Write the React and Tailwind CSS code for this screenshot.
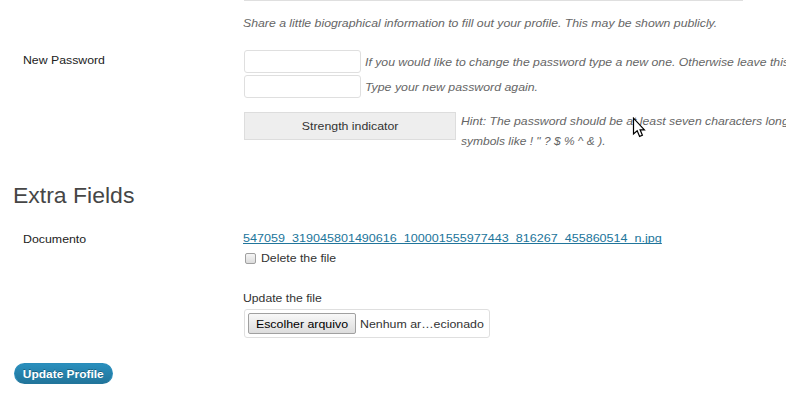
function Cursor() {
  return (
    <svg className="absolute left-[632px] top-[117px] h-[22px] w-[15px]" viewBox="0 0 15 22">
      <path d="M1.5 1.2V17L5.2 13.8L7.6 19.4L10.4 18.2L8.1 12.8H12.4Z" fill="#fff" stroke="#000" strokeWidth="1.2" />
    </svg>
  );
}

function PasswordInput() {
  return <input type="password" className="h-[23px] w-[117px] shrink-0 rounded-[3px] border border-[#dfdfdf] bg-white px-1 outline-none" />;
}

const wide = "inline-block origin-left whitespace-nowrap";
const hint = "block origin-left whitespace-nowrap italic text-[#666]";

export default function App() {
  return (
    <main className="relative h-[417px] w-[786px] overflow-hidden bg-white font-['Liberation_Sans',Arial,sans-serif] text-[11px] leading-5 text-[#333]">
      <div className="ml-[244px] h-px w-[499px] bg-[#dfdfdf]" />
      <p className="ml-[243px] mt-[12px] w-[425px]">
        <span className={`${hint} scale-x-[1.115]`}>
          Share a little biographical information to fill out your profile. This may be shown publicly.
        </span>
      </p>
      <section className="mt-[17px] flex h-[101px]">
        <div className="w-[220px] shrink-0 pl-[23px] text-[#222]">
          <span className={`${wide} scale-x-[1.117]`}>New Password</span>
        </div>
        <div className="w-[540px] shrink-0 pl-[24px]">
          <div className="flex h-[25px] gap-[4px]">
            <PasswordInput />
            <span className={`mt-[2px] ${hint} scale-x-[1.113]`}>
              If you would like to change the password type a new one. Otherwise leave this
            </span>
          </div>
          <div className="flex h-[25px] gap-[4px]">
            <PasswordInput />
            <span className={`mt-[2px] ${hint} scale-x-[1.12]`}>Type your new password again.</span>
          </div>
          <div className="mt-[11px] flex gap-[5px]">
            <div className="mt-px h-[28px] w-[212px] shrink-0 border border-[#ddd] bg-[#eee] text-center leading-[27px]">
              <span className="inline-block scale-x-[1.12]">Strength indicator</span>
            </div>
            <p>
              <span className={`${hint} scale-x-[1.112]`}>Hint: The password should be at least seven characters long</span>
              <span className={`${hint} scale-x-[1.09]`}>symbols like ! " ? $ % ^ &amp; ).</span>
            </p>
          </div>
        </div>
      </section>
      <h3 className="ml-[13px] mt-[31px] h-[28px] text-[22px] leading-[28px] text-[#464646]">
        <span className={`${wide} scale-x-[1.045]`}>Extra Fields</span>
      </h3>
      <section className="mt-[19px] flex h-[110px]">
        <div className="w-[220px] shrink-0 pl-[23px] text-[#222]">
          <span className={`${wide} scale-x-[1.123]`}>Documento</span>
        </div>
        <div className="pl-[23px]">
          <div className="-mt-px h-[20px]">
            <a className={`${wide} scale-x-[1.143] text-[#21759b] underline decoration-1 underline-offset-1 [text-decoration-skip-ink:none]`}>
              547059_319045801490616_100001555977443_816267_455860514_n.jpg
            </a>
          </div>
          <label className="flex h-[20px] items-center gap-[5px] pl-[2px]">
            <span className="h-[11px] w-[11px] rounded-[2px] border border-[#a0a0a0] bg-linear-to-b from-[#f5f5f5] to-[#dcdcdc]" />
            <span className={`${wide} scale-x-[1.117]`}>Delete the file</span>
          </label>
          <div className="mt-[20px] h-[20px]">
            <span className={`${wide} scale-x-[1.11]`}>Update the file</span>
          </div>
          <div className="ml-px mt-px flex h-[29px] w-[246px] items-center rounded-[3px] border border-[#dfdfdf] px-[3px]">
            <button className="h-[21px] w-[108px] shrink-0 rounded-[2px] border border-[#a0a0a0] bg-linear-to-b from-[#f8f8f8] to-[#dddddd] pt-px leading-[19px] text-black">
              <span className="inline-block whitespace-nowrap scale-x-[1.125]">Escolher arquivo</span>
            </button>
            <span className={`ml-[4px] ${wide} scale-x-[1.125]`}>Nenhum ar…ecionado</span>
          </div>
        </div>
      </section>
      <button className="ml-[14px] mt-[24px] block h-[21px] w-[99px] rounded-full border border-[#298cba] border-b-[#21759b] bg-linear-to-b from-[#2a8fbd] to-[#21759b] pt-px font-bold leading-[19px] text-white [text-shadow:0_-1px_0_rgba(0,0,0,0.3)]">
        <span className="inline-block whitespace-nowrap scale-x-[1.085]">Update Profile</span>
      </button>
      <Cursor />
    </main>
  );
}
